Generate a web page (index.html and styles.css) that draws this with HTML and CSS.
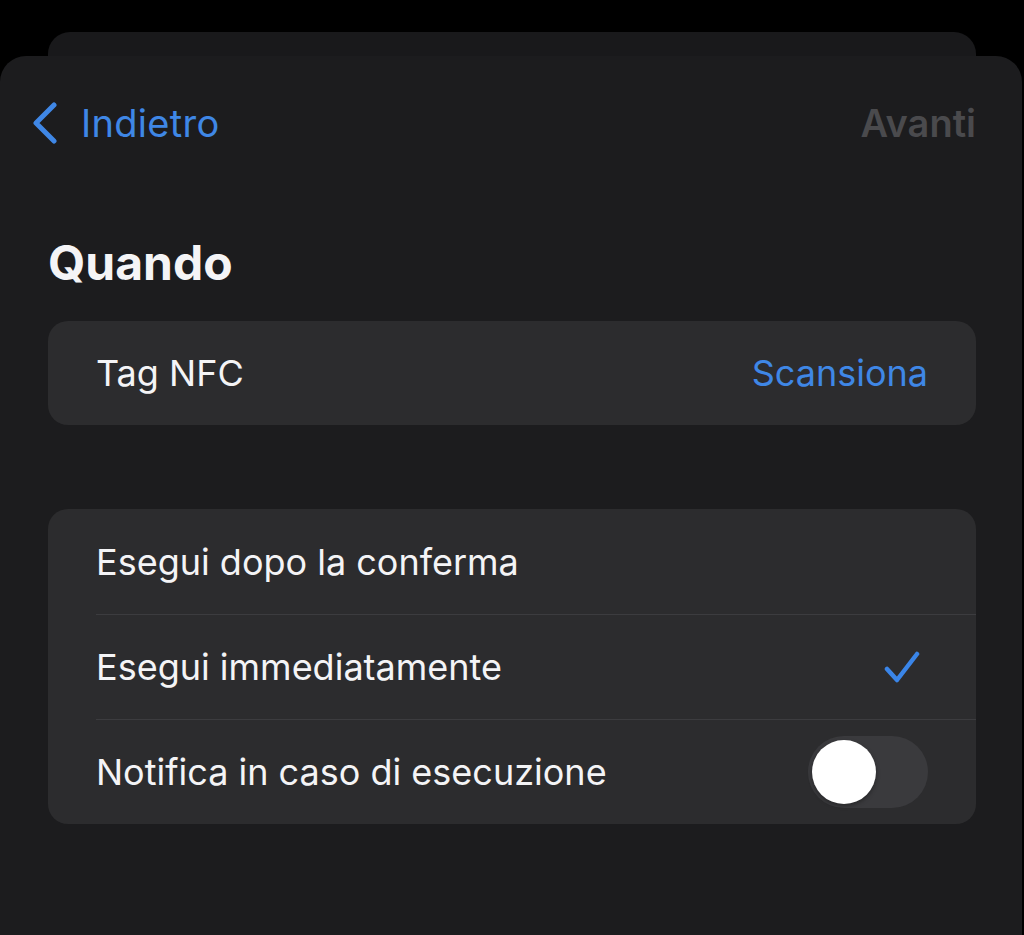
FILE: index.html
```html
<!DOCTYPE html>
<html lang="it">
<head>
    <meta charset="utf-8" />
    <title>Quando</title>
    <link rel="stylesheet" href="styles.css">
</head>
<body>
    <div class="sheet-behind"></div>
    <div class="sheet">
        <div class="nav">
            <a class="nav-back">
                <svg class="chevron" width="28" height="42" viewBox="0 0 28 42">
                    <path d="M24 3 L6 21 L24 39" fill="none" stroke="currentColor" stroke-width="5" stroke-linecap="round" stroke-linejoin="round" />
                </svg>
                <span>Indietro</span>
            </a>
            <span class="nav-next">Avanti</span>
        </div>

        <h1 class="title">Quando</h1>

        <div class="group">
            <div class="row">
                <span class="label">Tag NFC</span>
                <span class="action">Scansiona</span>
            </div>
        </div>

        <div class="group group-options">
            <div class="row">
                <span class="label">Esegui dopo la conferma</span>
            </div>
            <div class="row">
                <span class="label">Esegui immediatamente</span>
                <svg class="check" width="36" height="36" viewBox="0 0 36 36">
                    <path d="M3 20 L13 31 L33 5" fill="none" stroke="currentColor" stroke-width="4.5" stroke-linecap="round" stroke-linejoin="round" />
                </svg>
            </div>
            <div class="row">
                <span class="label">Notifica in caso di esecuzione</span>
                <span class="toggle"><span class="knob"></span></span>
            </div>
        </div>
    </div>
</body>
</html>
```

FILE: styles.css
```css
html, body {
    margin: 0;
    height: 100%;
}

body {
    background-color: #000;
    font-family: Inter, "Noto Sans", sans-serif;
    color: #f4f4f6;
    display: flex;
    flex-direction: column;
    padding-top: 32px;
    box-sizing: border-box;
    overflow: hidden;
}

.sheet-behind {
    height: 24px;
    margin: 0 48px;
    background-color: #19191b;
    border-radius: 22px 22px 0 0;
}

.sheet {
    flex: 1;
    margin-right: 2px;
    background-color: #1c1c1e;
    border-radius: 26px 26px 0 0;
    padding: 0 46px 0 48px;
}

.nav {
    height: 134px;
    display: flex;
    align-items: center;
    justify-content: space-between;
    font-size: 38px;
}

.nav-back {
    display: flex;
    align-items: center;
    gap: 23px;
    margin-left: -18px;
    color: #3f87e6;
    letter-spacing: 0.3px;
}

.nav-next {
    color: #4a4a4d;
    font-weight: 600;
}

.title {
    margin: 44px 0 30px 0;
    font-size: 48px;
    font-weight: 700;
    line-height: 57px;
}

.group {
    background-color: #2c2c2e;
    border-radius: 20px;
    margin-bottom: 84px;
    overflow: hidden;
}

.row {
    height: 104px;
    display: flex;
    align-items: center;
    justify-content: space-between;
    margin-left: 48px;
    padding-right: 48px;
    font-size: 36px;
    box-sizing: border-box;
}

.group-options .row {
    height: 105px;
}

.group-options .row + .row {
    border-top: 1px solid #3c3c3f;
}

.action {
    color: #3f87e6;
}

.check {
    color: #3a85e8;
    margin-right: 8px;
}

.toggle {
    width: 120px;
    height: 72px;
    border-radius: 36px;
    background-color: #3a3a3d;
    display: flex;
    align-items: center;
    padding-left: 4px;
    box-sizing: border-box;
}

.knob {
    width: 64px;
    height: 64px;
    border-radius: 50%;
    background-color: #fff;
    box-shadow: 0 2px 4px rgba(0, 0, 0, 0.35);
}
```
